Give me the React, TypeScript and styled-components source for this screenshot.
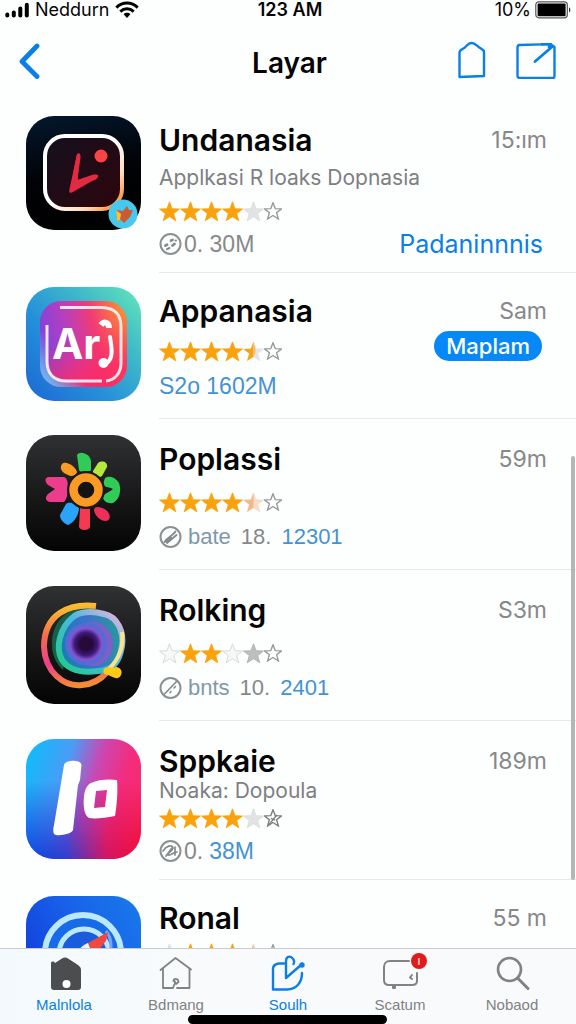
import React from 'react';
import styled, { createGlobalStyle, css } from 'styled-components';

const BLUE = '#0a7fe6';
const GREY = '#86888a';
const AMBER = '#f9a20b';

const GlobalStyle = createGlobalStyle`
  *, *::before, *::after { box-sizing: border-box; }
  body {
    margin: 0;
    background: #fdfefe;
    color: #050505;
    font-family: Inter, "Liberation Sans", sans-serif;
  }
  button { font: inherit; color: inherit; border: 0; background: none; padding: 0; cursor: pointer; }
  h1, h2, p, ul { margin: 0; padding: 0; font-weight: inherit; }
  ul { list-style: none; }
  svg { display: block; flex: none; }
`;

const Screen = styled.div`
  display: flex;
  flex-direction: column;
  height: 100vh;
  overflow: hidden;
`;

/* ---------- status bar ---------- */

const StatusBar = styled.div`
  display: grid;
  grid-template-columns: 1fr auto 1fr;
  align-items: center;
  height: 20px;
  padding: 0 5px;
  font-size: 18px;
  line-height: 20px;
`;

const StatusGroup = styled.div<{ $end?: boolean; $gap: number }>`
  display: flex;
  align-items: center;
  gap: ${(p) => p.$gap}px;
  justify-content: ${(p) => (p.$end ? 'flex-end' : 'flex-start')};
`;

const Clock = styled.span`
  padding-left: 4px;
  font-weight: 600;
`;

/* ---------- navigation bar ---------- */

const NavBar = styled.header`
  display: grid;
  grid-template-columns: 1fr auto 1fr;
  align-items: center;
  height: 80px;
  padding: 0 20px 0 18px;
  flex: none;
`;

const NavTitle = styled.h1`
  padding: 5px 0 0 5px;
  font-size: 28px;
  line-height: 40px;
  font-weight: 600;
`;

const NavActions = styled.div`
  display: flex;
  justify-content: flex-end;
  gap: 30px;
`;

const IconButton = styled.button`
  display: inline-flex;
  justify-self: start;
  color: ${BLUE};
`;

/* ---------- list ---------- */

const Viewport = styled.main`
  position: relative;
  flex: 1;
  min-height: 0;
  overflow: hidden;
`;

const ScrollThumb = styled.div`
  position: absolute;
  top: 42%;
  right: 1px;
  width: 4px;
  height: 50%;
  border-radius: 2px;
  background: #b4b6b8;
`;

const Row = styled.li<{ $top: number }>`
  display: flex;
  gap: 18px;
  padding: ${(p) => p.$top}px 0 0 26px;
`;

const RowBody = styled.div<{ $bottom: number }>`
  display: flex;
  flex: 1;
  min-width: 0;
  justify-content: space-between;
  padding: 4px 29px ${(p) => p.$bottom}px 0;
  border-bottom: 1px solid #e6e8e9;
`;

const Main = styled.div`
  display: flex;
  flex-direction: column;
  min-width: 0;
`;

const Name = styled.h2<{ $compact?: boolean }>`
  font-size: 30px;
  line-height: ${(p) => (p.$compact ? 36 : 40)}px;
  font-weight: 600;
  white-space: nowrap;
`;

const Subtitle = styled.p<{ $compact?: boolean }>`
  font-size: 21px;
  line-height: ${(p) => (p.$compact ? 24 : 36)}px;
  color: #7d7f81;
  white-space: nowrap;
`;

const Rating = styled.div<{ $gap: number }>`
  display: flex;
  align-items: center;
  height: 30px;
  margin-top: ${(p) => p.$gap}px;
`;

const Meta = styled.p<{ $gap: number; $spread?: boolean }>`
  display: flex;
  align-items: center;
  gap: ${(p) => (p.$spread ? 6 : 2)}px;
  margin-top: ${(p) => p.$gap}px;
  font-family: "Liberation Sans", sans-serif;
  font-size: ${(p) => (p.$spread ? 22 : 23)}px;
  line-height: 36px;
  color: ${GREY};
  white-space: nowrap;
`;

type Tone = 'grey' | 'slate' | 'blue';
const toneColor: Record<Tone, string> = { grey: GREY, slate: '#8199a6', blue: '#4592d2' };

const MetaText = styled.span<{ $tone: Tone }>`
  color: ${(p) => toneColor[p.$tone]};
  & + & { margin-left: 4px; }
`;

const Side = styled.div<{ $spread?: boolean }>`
  display: flex;
  flex-direction: column;
  align-items: flex-end;
  justify-content: ${(p) => (p.$spread ? 'space-between' : 'flex-start')};
`;

const Time = styled.span<{ $compact?: boolean }>`
  font-size: 23px;
  line-height: ${(p) => (p.$compact ? 36 : 40)}px;
  color: ${GREY};
`;

const ActionLink = styled.a`
  margin-right: 4px;
  font-size: 25px;
  line-height: 36px;
  color: ${BLUE};
  text-decoration: none;
`;

const Pill = styled.button`
  && {
    height: 30px;
    margin-right: 5px;
    padding: 0 12px;
    border-radius: 15px;
    background: #0788f7;
    color: #fff;
    font-size: 22px;
    line-height: 30px;
    font-weight: 500;
  }
`;

/* ---------- tab bar ---------- */

const TabBar = styled.nav`
  position: relative;
  display: grid;
  grid-template-columns: repeat(5, 1fr);
  flex: none;
  height: 76px;
  padding: 0 8px;
  border-top: 1px solid #c9cbcd;
  background: linear-gradient(90deg, #f3fafd, #f9fafb 40%);
`;

const Tab = styled.button<{ $tint: string }>`
  && {
    display: flex;
    flex-direction: column;
    align-items: center;
    gap: 3px;
    padding-top: 5px;
    color: ${(p) => p.$tint};
    font-family: "Liberation Sans", sans-serif;
    font-size: 15px;
    line-height: 20px;
  }
`;

const TabIcon = styled.span<{ $color?: string }>`
  position: relative;
  display: block;
  ${(p) => p.$color && css`color: ${p.$color};`}
`;

const Badge = styled.span`
  position: absolute;
  top: -1px;
  right: -8px;
  width: 16px;
  height: 16px;
  border-radius: 50%;
  background: #e11b1b;
  color: #fff;
  font-size: 12px;
  line-height: 16px;
  text-align: center;
`;

const HomeIndicator = styled.div`
  position: absolute;
  left: 50%;
  bottom: 0;
  width: 199px;
  height: 9px;
  margin-left: -100px;
  border-radius: 5px;
  background: #000;
`;

/* ---------- stars ---------- */

type StarKind = 'full' | 'partial' | 'half' | 'faint' | 'line' | 'grey' | 'outline' | 'slashed';
const STAR = 'M10.5 0.8 L13.1 7.7 L20.5 8 L14.7 12.6 L16.8 19.8 L10.5 15.7 L4.2 19.8 L6.3 12.6 L0.5 8 L7.9 7.7 Z';

function Star({ kind }: { kind: StarKind }) {
  const small = kind === 'outline' || kind === 'slashed';
  const size = small ? 18 : 21;
  const fill = { full: AMBER, partial: '#f9dcc4', half: '#e4e4e6', faint: '#e2e3e5', line: '#f7f7f8', grey: '#bdbec0', outline: '#fff', slashed: '#fff' }[kind];
  const stroke = { full: AMBER, partial: '#ecdfd6', half: '#e4e4e6', faint: '#dadbdd', line: '#cfd0d2', grey: '#a9abad', outline: '#98999b', slashed: '#7c7e80' }[kind];
  return (
    <svg width={size} height={size} viewBox="0 0 21 21" aria-hidden="true">
      <path d={STAR} fill={fill} stroke={stroke} strokeWidth={small ? 1.6 : 0.8} />
      {kind === 'half' && <path d="M10.5 0.8V15.7L4.2 19.8L6.3 12.6L0.5 8L7.9 7.7Z" fill={AMBER} />}
      {kind === 'half' && <path d="M10.5 1L12.5 8V12L10.5 15.7Z" fill="#f5bd72" />}
      {kind === 'partial' && <path d="M10.5 1V15.7L4.2 19.8L6.3 12.6L0.5 8L7.9 7.7Z" fill="#f4b88a" />}
      {kind === 'slashed' && <path d="M15 7L6 18M8 11L13 13" stroke={stroke} strokeWidth={1.6} />}
    </svg>
  );
}

/* ---------- small glyphs ---------- */

type Mark = 'dots' | 'slash' | 'thin' | 'scribble';

function MetaMark({ kind }: { kind: Mark }) {
  return (
    <svg width={23} height={24} viewBox="0 0 23 24" fill="none" stroke={GREY} strokeWidth={2} strokeLinecap="round" aria-hidden="true">
      <circle cx="11.5" cy="12" r="10" stroke="#8b9193" />
      {kind === 'dots' && (
        <g>
          <path d="M6.5 13.5L8 12.8M12 8.5L13.5 8M13.5 13.5L15.5 12" strokeWidth={2.8} />
          <path d="M8 17.2L10.5 16M16.5 8.5H17" />
        </g>
      )}
      {kind === 'slash' && <path d="M5.5 17C8 12 14 11 16.5 6.5M8 18L17.5 10M7 16.5L12 12.5" strokeWidth={1.8} />}
      {kind === 'thin' && <path d="M5.5 18L17.5 5.5M11 16.5L12 15.5M15 12L16.5 10.5" strokeWidth={1.6} />}
      {kind === 'scribble' && <path d="M4 12C7 7 13 5 14 9C14 12 8 14 9 16C12 17 14 13 18 13M7 17L13 9M16 8V16" strokeWidth={1.7} />}
    </svg>
  );
}

const SignalIcon = () => (
  <svg width={24} height={16} viewBox="0 0 24 16" stroke="#000" strokeWidth={4} strokeLinecap="round" aria-label="Signal">
    <path d="M2.3 12.6V13.5M8.8 10.5V13.5M15.3 6.5V13.5M21.8 2.8V13.5" />
  </svg>
);

const WifiIcon = () => (
  <svg width={24} height={18} viewBox="0 0 24 18" fill="none" stroke="#000" strokeWidth={3} aria-label="Wi-Fi">
    <path d="M1.3 6.6C7.5 0.6 16.5 0.6 22.7 6.6M5.3 10.6C9.3 6.8 14.7 6.8 18.7 10.6" />
    <path d="M8.6 13.2C10.5 11.4 13.5 11.4 15.4 13.2L12 17Z" fill="#000" stroke="none" />
  </svg>
);

const BatteryIcon = () => (
  <svg width={36} height={18} viewBox="0 0 36 18" aria-label="Battery">
    <rect x="0.8" y="0.8" width="31.5" height="16" rx="3" fill="#fff" stroke="#555" strokeWidth={1.2} />
    <rect x="2.6" y="2.6" width="28" height="12.6" rx="1" fill="#000" />
    <path d="M34 6.2C35.8 7 35.8 10.6 34 11.4Z" fill="#333" />
  </svg>
);

const BackIcon = () => (
  <svg width={24} height={38} viewBox="0 0 24 38" fill="none" stroke={BLUE} strokeWidth={4.8} strokeLinecap="round" strokeLinejoin="round">
    <path d="M19 5L4 20.5L19 35.500" />
  </svg>
);

const TagIcon = () => (
  <svg width={28} height={38} viewBox="0 0 28 38" fill="none" stroke={BLUE} strokeWidth={2.4} strokeLinejoin="round">
    <path d="M1.5 36V11.5C1.5 9.5 3 8.8 5 7.8C9 5.5 9.5 2 13.5 2C17.5 2 18 4.5 22 7C24.5 8.5 26 9 26 11V35L1.5 36Z" />
  </svg>
);

const ComposeIcon = () => (
  <svg width={40} height={38} viewBox="0 0 40 38" fill="none" stroke={BLUE} strokeWidth={2.4} strokeLinejoin="round" strokeLinecap="round">
    <path d="M3 4L26 3.4M3 4C1.5 4.5 1.5 5.5 1.5 7V35C1.5 36.5 2 37 4 37H37C38.500 37 38.500 36 38.500 35V6L36 4.5" />
    <path d="M26 3.4H35L33 6M37 5L19 20.5" strokeWidth={2.8} />
  </svg>
);

/* ---------- app artwork ---------- */

const Art = ({ h, children }: { h: number; children: React.ReactNode }) => (
  <svg width={115} height={h} viewBox={`0 0 115 ${h}`} aria-hidden="true">{children}</svg>
);

const UndanasiaArt = () => (
  <Art h={114}>
    <defs>
      <linearGradient id="u-bg" x1="0" y1="0" x2="0.2" y2="1">
        <stop offset="0" stopColor="#04182f" /><stop offset="0.55" stopColor="#020307" /><stop offset="1" stopColor="#000" />
      </linearGradient>
      <linearGradient id="u-in" x1="0" y1="0" x2="1" y2="1">
        <stop offset="0" stopColor="#14101f" /><stop offset="1" stopColor="#2e050c" />
      </linearGradient>
      <linearGradient id="u-line" x1="0" y1="0" x2="1" y2="1">
        <stop offset="0.5" stopColor="#fff" /><stop offset="0.75" stopColor="#ffdcc0" /><stop offset="0.9" stopColor="#ffa04e" />
      </linearGradient>
    </defs>
    <rect width="115" height="114" rx="28" fill="url(#u-bg)" />
    <rect x="19" y="20" width="77" height="73" rx="20" fill="url(#u-in)" stroke="url(#u-line)" strokeWidth="4" />
    <path d="M51 38C53 36 55 38 54.500 42L51 66L65 60C70 57.500 73 58 72 61C71 63 69 64 66 65L46 76.500C43 77.500 43 76 43.500 73L50 43Z" fill="#e42a42" />
    <path d="M49 56L52 40L50 66L68 60L46 74Z" fill="#e42a42" stroke="#e42a42" strokeWidth="3" strokeLinejoin="round" />
    <circle cx="75" cy="40" r="6.500" fill="#fb4444" />
    <circle cx="97" cy="98" r="14.500" fill="#47c8ee" />
    <path d="M90 94L97 95L101 90L103 94L107 94L104 101L98 107L95 104L91 105Z" fill="#c85a34" />
    <path d="M90 94L95 98L94 104L91 105Z" fill="#f6c23c" />
  </Art>
);

const AppanasiaArt = () => (
  <Art h={114}>
    <defs>
      <linearGradient id="a-bg" x1="1" y1="0" x2="0" y2="0.9">
        <stop offset="0" stopColor="#63e8b8" /><stop offset="0.3" stopColor="#42bcc8" /><stop offset="0.65" stopColor="#2590da" /><stop offset="1" stopColor="#1d6cd4" />
      </linearGradient>
      <linearGradient id="a-in" gradientUnits="userSpaceOnUse" x1="14" y1="64" x2="101" y2="44">
        <stop offset="0" stopColor="#7a43dd" /><stop offset="0.35" stopColor="#b63fc0" /><stop offset="0.65" stopColor="#f23b74" /><stop offset="1" stopColor="#fd8a35" />
      </linearGradient>
      <linearGradient id="a-low" x1="0" y1="0" x2="0.4" y2="1">
        <stop offset="0.45" stopColor="#ff2b66" stopOpacity="0" /><stop offset="1" stopColor="#fb2b66" stopOpacity="0.85" />
      </linearGradient>
      <linearGradient id="a-left" x1="1" y1="0.2" x2="0" y2="1">
        <stop offset="0.66" stopColor="#5fc6ff" stopOpacity="0" /><stop offset="0.95" stopColor="#5fc6ff" />
      </linearGradient>
    </defs>
    <rect width="115" height="114" rx="28" fill="url(#a-bg)" />
    <rect x="14" y="14" width="87" height="86" rx="21" fill="url(#a-in)" />
    <rect x="14" y="14" width="87" height="86" rx="21" fill="url(#a-low)" />
    <rect x="14" y="14" width="87" height="86" rx="21" fill="url(#a-left)" />
    <rect x="21" y="20" width="74" height="74" rx="19" fill="url(#a-in)" />
    <rect x="21" y="20" width="74" height="74" rx="19" fill="url(#a-low)" />
    <path d="M21 38V74C21 87 28 94 41 94H76" fill="none" stroke="#fff" strokeWidth="3" opacity="0.85" />
    <path d="M34 20.500H76C90 21 95 28 95 40V76C95 86 89 93 80 94" fill="none" stroke="#fff" strokeWidth="3" opacity="0.85" />
    <text x="26" y="72" fontFamily="Inter, sans-serif" fontWeight="700" fontSize="42" fill="#fff">Ar</text>
    <path d="M75 38C78 34 83 35 83 41" fill="none" stroke="#fff" strokeWidth="6" />
    <path d="M84 50C86 62 87 70 82 75C79 79 75 77 76 74" fill="none" stroke="#fff" strokeWidth="4" strokeLinecap="round" />
    <circle cx="77.500" cy="76" r="5" fill="#fff" />
  </Art>
);

const DarkDefs = ({ id }: { id: string }) => (
  <defs>
    <linearGradient id={id} x1="0" y1="0" x2="0" y2="1">
      <stop offset="0" stopColor="#303133" /><stop offset="0.6" stopColor="#151516" /><stop offset="1" stopColor="#040404" />
    </linearGradient>
  </defs>
);

const PoplassiArt = () => (
  <Art h={116}>
    <DarkDefs id="p-bg" />
    <rect width="115" height="116" rx="28" fill="url(#p-bg)" />
    <path d="M51 20C54 15 65 19 65 27L65 35C64 38 54 38 53 35Z" fill="#31cb58" />
    <path d="M36 29C40 25 50 32 51 37C50 41 45 42 42 40C36 38 33 33 36 29Z" fill="#fb9a24" />
    <path d="M72 28C76 25 82 27 81 32L76 41C73 44 66 40 67 36Z" fill="#b4e83a" />
    <path d="M23 42H38C41 43 42 47 42 52C42 58 41 64 38 67H24C19 66 19 62 22 59L29 54L22 50C18 46 19 42 23 42Z" fill="#ec3d8c" />
    <path d="M79 43C84 40 90 43 93 48C96 56 93 65 87 68C82 69 77 66 77 62C78 58 84 57 87 54C83 52 77 52 77 49Z" fill="#31cb58" />
    <path d="M40 69C43 66 53 69 53 74C52 82 47 88 42 90C37 88 34 84 34 80Z" fill="#2aa4fa" />
    <path d="M54 73C57 71 64 71 64 75V92C63 96 54 96 53 92Z" fill="#f23a50" />
    <path d="M68 75C68 71 74 71 80 75C85 79 85 85 80 86C74 86 69 81 68 75Z" fill="#ee2f5a" />
    <circle cx="60" cy="55" r="13" fill="#141414" stroke="#1a1a1b" strokeWidth="12" />
    <circle cx="60" cy="55" r="12.500" fill="#141414" stroke="#fb9a24" strokeWidth="8.500" />
  </Art>
);

const RolkingArt = () => (
  <Art h={118}>
    <DarkDefs id="r-bg" />
    <defs>
      <linearGradient id="r-arc" x1="0.4" y1="0" x2="0.5" y2="1">
        <stop offset="0" stopColor="#fdbf2b" /><stop offset="0.35" stopColor="#f46a4e" /><stop offset="0.7" stopColor="#ee3f8b" /><stop offset="1" stopColor="#f58b32" />
      </linearGradient>
      <linearGradient id="r-ring" x1="0" y1="1" x2="1" y2="0">
        <stop offset="0.1" stopColor="#26c896" /><stop offset="0.55" stopColor="#4bb8dd" /><stop offset="1" stopColor="#efb4dc" />
      </linearGradient>
      <linearGradient id="r-body" x1="0" y1="0.6" x2="1" y2="0.4">
        <stop offset="0" stopColor="#167fae" /><stop offset="0.5" stopColor="#3d71cc" /><stop offset="1" stopColor="#249c9a" />
      </linearGradient>
      <radialGradient id="r-eye">
        <stop offset="0.3" stopColor="#260a3a" /><stop offset="0.55" stopColor="#3f1a7c" /><stop offset="0.75" stopColor="#8555d0" /><stop offset="1" stopColor="#3b76d6" />
      </radialGradient>
    </defs>
    <rect width="115" height="118" rx="28" fill="url(#r-bg)" />
    <path d="M58 21C38 24 26 38 26 58C26 71 31 78 37 84L48 30L72 24Z" fill="#176048" />
    <path d="M70 20C43 17 18 28 18 61C19 86 38 101 56 99C69 98 76 92 81 86" fill="none" stroke="url(#r-arc)" strokeWidth="6" />
    <path d="M46 32C53 25 67 25 78 28C92 31 98 46 96 60C93 78 86 84 72 85C57 87 43 85 36 74C29 62 34 42 46 32Z" fill="url(#r-body)" stroke="url(#r-ring)" strokeWidth="6" />
    <path d="M96 46C98 62 92 74 83 83" fill="none" stroke="#fae48a" strokeWidth="4" />
    <ellipse cx="67" cy="58" rx="20" ry="22" fill="#7c5fc7" />
    <circle cx="60" cy="58" r="21" fill="url(#r-eye)" />
    <path d="M79 82C83 80 87 83 90 81C94 81 97 85 95 89C92 95 87 91 82 89C77 89 76 84 79 82Z" fill="#ffc917" />
  </Art>
);

const SppkaieArt = () => (
  <Art h={120}>
    <defs>
      <linearGradient id="s-bg" x1="0" y1="0.3" x2="1" y2="0.6">
        <stop offset="0" stopColor="#16b8fb" /><stop offset="0.3" stopColor="#4a9cf5" /><stop offset="0.55" stopColor="#ca48b4" /><stop offset="0.8" stopColor="#f42c7c" /><stop offset="1" stopColor="#f52d72" />
      </linearGradient>
      <linearGradient id="s-low" x1="0" y1="0" x2="1" y2="0">
        <stop offset="0" stopColor="#0a46e0" /><stop offset="0.35" stopColor="#2c3fd2" /><stop offset="0.7" stopColor="#d21563" /><stop offset="1" stopColor="#f20a35" />
      </linearGradient>
      <linearGradient id="s-fade" x1="0" y1="0" x2="0" y2="1">
        <stop offset="0.35" stopColor="#000" /><stop offset="1" stopColor="#fff" />
      </linearGradient>
      <mask id="s-mask"><rect width="115" height="120" fill="url(#s-fade)" /></mask>
    </defs>
    <rect width="115" height="120" rx="28" fill="url(#s-bg)" />
    <rect width="115" height="120" rx="28" fill="url(#s-low)" mask="url(#s-mask)" />
    <path d="M38 26C39 21 55 20 55.500 26L54 41L52 46L47 91C46 95 31 98 28 95C27 93 27 90 28 86Z" fill="#fff" />
    <path d="M65 44C73 40 84 40 91 41C92 51 91 66 89 77C79 79 69 80 63 79C58 76 57 67 58 57C59 50 61 46 65 44ZM70 52L68 69L79 68L81 51Z" fill="#fff" fillRule="evenodd" />
  </Art>
);

const RonalArt = () => (
  <Art h={116}>
    <defs>
      <linearGradient id="n-bg" x1="0" y1="0.6" x2="1" y2="0">
        <stop offset="0" stopColor="#123fdc" /><stop offset="0.5" stopColor="#1862ea" /><stop offset="1" stopColor="#197ae8" />
      </linearGradient>
    </defs>
    <rect width="115" height="116" rx="28" fill="url(#n-bg)" />
    <circle cx="57" cy="57" r="38" fill="#176be8" stroke="#b9e8ff" strokeWidth="6" />
    <circle cx="58" cy="58" r="25" fill="#1a5cdd" stroke="#b9e8ff" strokeWidth="5" />
    <path d="M80 35C86 42 86 52 83 62" fill="none" stroke="#7da4ef" strokeWidth="3" />
    <path d="M82 36L62 47L68 60L80 45Z" fill="#f0473f" />
    <path d="M62 47C54 50 51 56 51 62H68Z" fill="#e6f5ff" />
  </Art>
);

/* ---------- data ---------- */

interface AppItem {
  name: string;
  art: React.ReactNode;
  time: string;
  subtitle?: string;
  compact?: boolean;
  stars: StarKind[];
  mark?: Mark;
  meta?: { text: string; tone: Tone }[];
  link?: string;
  pill?: string;
  top: number;
  bottom: number;
  ratingGap: number;
  metaGap: number;
}

const apps: AppItem[] = [
  {
    name: 'Undanasia', art: <UndanasiaArt />, time: '15:ım', subtitle: 'Applkasi R loaks Dopnasia',
    stars: ['full', 'full', 'full', 'full', 'faint', 'outline'], mark: 'dots',
    meta: [{ text: '0. 30M', tone: 'grey' }], link: 'Padaninnnis', top: 16, bottom: 10, ratingGap: 0, metaGap: 0,
  },
  {
    name: 'Appanasia', art: <AppanasiaArt />, time: 'Sam',
    stars: ['full', 'full', 'full', 'full', 'half', 'outline'],
    meta: [{ text: 'S2o 1602M', tone: 'blue' }], pill: 'Maplam', top: 14, bottom: 14, ratingGap: 5, metaGap: 2,
  },
  {
    name: 'Poplassi', art: <PoplassiArt />, time: '59m',
    stars: ['full', 'full', 'full', 'full', 'partial', 'outline'], mark: 'slash',
    meta: [{ text: 'bate', tone: 'slate' }, { text: '18.', tone: 'grey' }, { text: '12301', tone: 'blue' }],
    top: 16, bottom: 14, ratingGap: 8, metaGap: 2,
  },
  {
    name: 'Rolking', art: <RolkingArt />, time: 'S3m',
    stars: ['line', 'full', 'full', 'line', 'grey', 'outline'], mark: 'thin',
    meta: [{ text: 'bnts', tone: 'slate' }, { text: '10.', tone: 'grey' }, { text: '2401', tone: 'blue' }],
    top: 16, bottom: 14, ratingGap: 8, metaGap: 2,
  },
  {
    name: 'Sppkaie', art: <SppkaieArt />, time: '189m', subtitle: 'Noaka: Dopoula', compact: true,
    stars: ['full', 'full', 'full', 'full', 'faint', 'slashed'], mark: 'scribble',
    meta: [{ text: '0.', tone: 'grey' }, { text: '38M', tone: 'blue' }], top: 18, bottom: 10, ratingGap: 0, metaGap: 0,
  },
  {
    name: 'Ronal', art: <RonalArt />, time: '55 m', compact: true,
    stars: ['faint', 'full', 'full', 'full', 'partial', 'outline'], top: 16, bottom: 40, ratingGap: 2, metaGap: 0,
  },
];

function AppRow({ app }: { app: AppItem }) {
  return (
    <Row $top={app.top}>
      {app.art}
      <RowBody $bottom={app.bottom}>
        <Main>
          <Name $compact={app.compact}>{app.name}</Name>
          {app.subtitle && <Subtitle $compact={app.compact}>{app.subtitle}</Subtitle>}
          <Rating $gap={app.ratingGap}>
            {app.stars.map((kind, i) => <Star key={i} kind={kind} />)}
          </Rating>
          {app.meta && (
            <Meta $gap={app.metaGap} $spread={app.meta.length > 2}>
              {app.mark && <MetaMark kind={app.mark} />}
              {app.meta.map((m) => <MetaText key={m.text} $tone={m.tone}>{m.text}</MetaText>)}
            </Meta>
          )}
        </Main>
        <Side $spread={Boolean(app.link)}>
          <Time $compact={app.compact}>{app.time}</Time>
          {app.link && <ActionLink href="#padaninnnis">{app.link}</ActionLink>}
          {app.pill && <Pill type="button">{app.pill}</Pill>}
        </Side>
      </RowBody>
    </Row>
  );
}

const iconProps = { width: 38, height: 38, viewBox: '0 0 38 38', fill: 'none', stroke: 'currentColor', strokeLinejoin: 'round', strokeLinecap: 'round' } as const;

export default function App() {
  return (
    <>
      <GlobalStyle />
      <Screen>
        <StatusBar>
          <StatusGroup $gap={6}>
            <SignalIcon />
            <span>Neddurn</span>
            <WifiIcon />
          </StatusGroup>
          <Clock>123 AM</Clock>
          <StatusGroup $gap={4} $end>
            <span>10%</span>
            <BatteryIcon />
          </StatusGroup>
        </StatusBar>

        <NavBar>
          <IconButton type="button" aria-label="Back"><BackIcon /></IconButton>
          <NavTitle>Layar</NavTitle>
          <NavActions>
            <IconButton type="button" aria-label="Tag"><TagIcon /></IconButton>
            <IconButton type="button" aria-label="Compose"><ComposeIcon /></IconButton>
          </NavActions>
        </NavBar>

        <Viewport>
          <ul>
            {apps.map((app) => <AppRow key={app.name} app={app} />)}
          </ul>
          <ScrollThumb />
        </Viewport>

        <TabBar>
          <Tab type="button" $tint={BLUE}>
            <TabIcon $color="#4b4d4f">
              <svg {...iconProps}>
                <path d="M6 9.500C6 7 9 7 10 9L17 4.500C19 3 21 3 23 4.500L33 11C35 12.500 36 14 36 16V33C36 35 35 36 33 36H9C7 36 6 35 6 33Z" fill="currentColor" stroke="none" />
                <circle cx="21.500" cy="30" r="4" fill="#fff" stroke="none" />
              </svg>
            </TabIcon>
            Malnlola
          </Tab>
          <Tab type="button" $tint="#808284">
            <TabIcon>
              <svg {...iconProps} strokeWidth={1.8}>
                <path d="M3.500 16L18.500 4L34 15.500M6 14.500V34H16L18 29M32.500 15V34H20" />
                <path d="M16.500 27C16.500 24 21.500 24 21.500 28L19 30L17.500 27" />
              </svg>
            </TabIcon>
            Bdmang
          </Tab>
          <Tab type="button" $tint={BLUE}>
            <TabIcon>
              <svg {...iconProps} strokeWidth={2.4}>
                <path d="M15 9.500H10C6 10 4 12 4 15V35.500H18C28 35 33 28 33 19" />
                <path d="M17 24V7C17 3 20 2 22 3C25 5 26 8 24.500 10M17 24L32 11" />
                <circle cx="33" cy="11" r="1.500" fill="currentColor" />
              </svg>
            </TabIcon>
            Soulh
          </Tab>
          <Tab type="button" $tint="#808284">
            <TabIcon>
              <svg {...iconProps} strokeWidth={2}>
                <path d="M28 7H9C5 7 3 10 3 13V26C3 30 5 31 8 31H31C34 31 36 30 36 27V19" />
                <path d="M31 21L29 23.500L31 25M12 32V34H14V32" />
              </svg>
              <Badge>ı</Badge>
            </TabIcon>
            Scatum
          </Tab>
          <Tab type="button" $tint="#808284">
            <TabIcon>
              <svg {...iconProps} strokeWidth={2.6}>
                <circle cx="16.500" cy="15.500" r="11.500" />
                <path d="M24.500 24L35 34.500" strokeWidth={3} />
              </svg>
            </TabIcon>
            Nobaod
          </Tab>
          <HomeIndicator />
        </TabBar>
      </Screen>
    </>
  );
}
